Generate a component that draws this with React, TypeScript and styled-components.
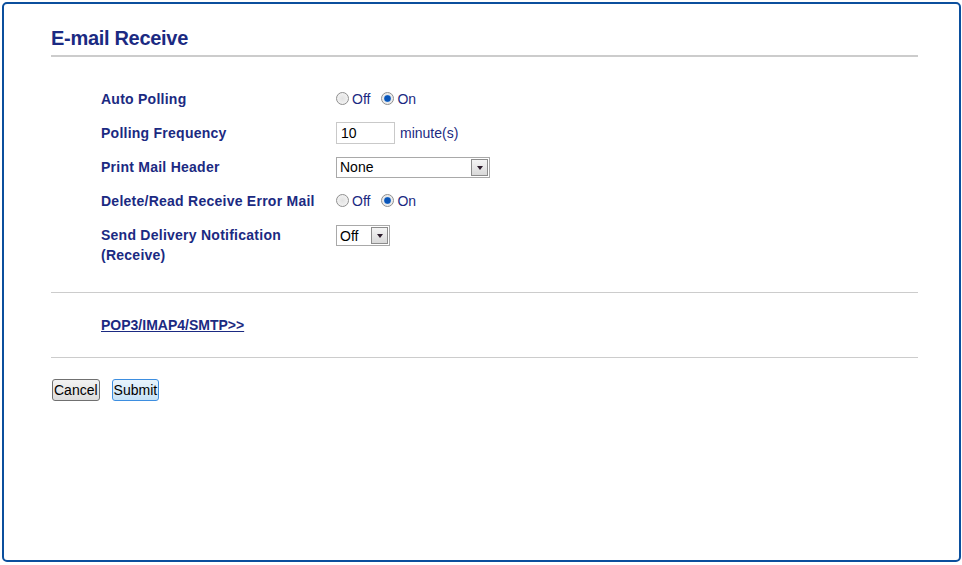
import React from "react";
import styled, { createGlobalStyle } from "styled-components";

const Global = createGlobalStyle`
  html, body { margin: 0; padding: 0; background: #fff; }
  body { font-family: "Liberation Sans", Arial, sans-serif; }
`;

const Panel = styled.div`
  box-sizing: border-box;
  margin: 2px;
  width: 959px;
  height: 560px;
  border: 2px solid #0b4f9d;
  border-radius: 5px;
  padding: 21px 41px 0 47px;
`;

const Title = styled.h1`
  margin: 0;
  font-size: 20px;
  letter-spacing: -0.3px;
  font-weight: bold;
  color: #1b2a82;
  line-height: 26px;
  padding-bottom: 4px;
  border-bottom: 2px solid #cccccc;
`;

const Form = styled.div`
  display: grid;
  grid-template-columns: 235px auto;
  padding: 25px 0 20px 50px;
`;

const Label = styled.div`
  font-size: 14px;
  font-weight: bold;
  letter-spacing: 0.25px;
  color: #1b2a82;
  line-height: 20px;
  padding: 7px 0;
`;

const Control = styled.div`
  display: flex;
  align-items: center;
  gap: 4px;
  height: 34px;
  font-size: 14px;
  color: #1b2a82;
`;

const TopControl = styled(Control)`
  align-items: flex-start;
  padding-top: 7px;
  height: auto;
  box-sizing: border-box;
`;

const RadioGroup = styled.label`
  display: inline-flex;
  align-items: center;
  gap: 3px;
  margin-right: 7px;
  font-size: 14px;
  color: #1b2a82;
`;

const Radio = styled.span<{ $checked?: boolean }>`
  box-sizing: border-box;
  display: inline-block;
  width: 13px;
  height: 13px;
  margin-top: -2px;
  border-radius: 50%;
  border: 1px solid #8f8f8f;
  background: ${(p) =>
    p.$checked
      ? "radial-gradient(circle, #0a55b8 0 2.8px, #5f98dc 3.3px, #e9e9e9 4px, #f4f4f4 100%)"
      : "radial-gradient(circle, #e2e2e2 0, #f8f8f8 100%)"};
`;

const TextInput = styled.div`
  box-sizing: border-box;
  width: 59px;
  height: 22px;
  border: 1px solid #c9c9c9;
  padding: 0 4px;
  font-size: 14px;
  line-height: 20px;
  color: #000;
  margin-right: 1px;
`;

const Select = styled.div<{ $w: number }>`
  box-sizing: border-box;
  display: flex;
  align-items: center;
  justify-content: space-between;
  width: ${(p) => p.$w}px;
  height: 21px;
  border: 1px solid #a9a9a9;
  padding: 0 1px 0 3px;
  font-size: 14px;
  color: #000;
`;

const Arrow = styled.span`
  box-sizing: border-box;
  width: 17px;
  height: 17px;
  border: 1px solid #8c8c8c;
  background: linear-gradient(#f4f4f4, #d9d9d9);
  display: flex;
  align-items: center;
  justify-content: center;
  &::after {
    content: "";
    border-left: 3.5px solid transparent;
    border-right: 3.5px solid transparent;
    border-top: 4px solid #2b1b2b;
    margin-top: 1px;
  }
`;

const Divider = styled.div`
  border-top: 1px solid #cccccc;
`;

const LinkRow = styled.div`
  padding: 23px 0 23px 50px;
  line-height: 18px;
  font-size: 14px;
`;

const Link = styled.a`
  font-size: 14px;
  font-weight: bold;
  color: #1b2a82;
  text-decoration: underline;
`;

const Buttons = styled.div`
  display: flex;
  gap: 12px;
  padding: 21px 0 0 1px;
`;

const Button = styled.button<{ $primary?: boolean }>`
  box-sizing: border-box;
  height: 22px;
  padding: 0 1px;
  font-family: "Liberation Sans", Arial, sans-serif;
  font-size: 14px;
  color: #000;
  border-radius: 3px;
  border: 1px solid ${(p) => (p.$primary ? "#3d8ee0" : "#707070")};
  background: ${(p) =>
    p.$primary
      ? "linear-gradient(#e8f4fc, #c6e2f7)"
      : "linear-gradient(#f2f2f2, #dddddd)"};
`;

export default function App() {
  return (
    <>
      <Global />
      <Panel>
        <Title>E-mail Receive</Title>
        <Form>
          <Label>Auto Polling</Label>
          <Control>
            <RadioGroup>
              <Radio />
              Off
            </RadioGroup>
            <RadioGroup>
              <Radio $checked />
              On
            </RadioGroup>
          </Control>

          <Label>Polling Frequency</Label>
          <Control>
            <TextInput>10</TextInput>
            minute(s)
          </Control>

          <Label>Print Mail Header</Label>
          <Control>
            <Select $w={154}>
              None
              <Arrow />
            </Select>
          </Control>

          <Label>Delete/Read Receive Error Mail</Label>
          <Control>
            <RadioGroup>
              <Radio />
              Off
            </RadioGroup>
            <RadioGroup>
              <Radio $checked />
              On
            </RadioGroup>
          </Control>

          <Label>Send Delivery Notification (Receive)</Label>
          <TopControl>
            <Select $w={54}>
              Off
              <Arrow />
            </Select>
          </TopControl>
        </Form>
        <Divider />
        <LinkRow>
          <Link href="#">POP3/IMAP4/SMTP&gt;&gt;</Link>
        </LinkRow>
        <Divider />
        <Buttons>
          <Button>Cancel</Button>
          <Button $primary>Submit</Button>
        </Buttons>
      </Panel>
    </>
  );
}
